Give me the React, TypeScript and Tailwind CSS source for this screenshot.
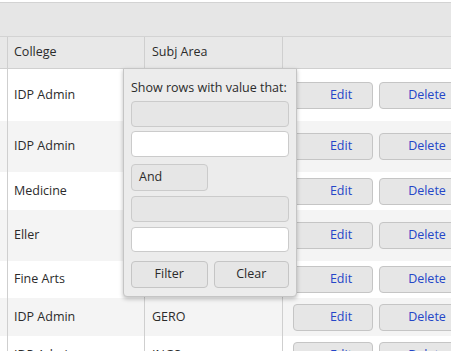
import React from 'react';

type Row = { college: string; subj: string; h: string; bg: string };

const rows: Row[] = [
  { college: 'IDP Admin', subj: '', h: 'h-[52px]', bg: 'bg-white' },
  { college: 'IDP Admin', subj: '', h: 'h-[51px]', bg: 'bg-[#f4f4f4]' },
  { college: 'Medicine', subj: '', h: 'h-[38px]', bg: 'bg-white' },
  { college: 'Eller', subj: '', h: 'h-[51px]', bg: 'bg-[#f4f4f4]' },
  { college: 'Fine Arts', subj: '', h: 'h-[37px]', bg: 'bg-white' },
  { college: 'IDP Admin', subj: 'GERO', h: 'h-[38px]', bg: 'bg-[#f4f4f4]' },
  { college: 'IDP Admin', subj: 'INGS', h: 'h-[38px]', bg: 'bg-white' },
];

const btn =
  'h-[27px] w-[80px] shrink-0 rounded-[4px] border border-[#c5c5c5] bg-[#e6e6e6] pl-[16px] text-[#2546c8]';

export default function App() {
  return (
    <div
      className="relative h-[351px] w-[451px] overflow-hidden bg-white text-[12.5px] text-[#2b2b2b]"
      style={{ fontFamily: '"Open Sans", "Noto Sans", sans-serif' }}
    >
      <div className="pt-[2px]">
        {/* toolbar band */}
        <div className="h-[35px] border-y border-[#d3d3d3] bg-[#e6e6e6]" />

        {/* header */}
        <div className="flex h-[32px] border-b border-[#d0d0d0] bg-[#e8e8e8]">
          <div className="w-[8px] shrink-0 border-r border-[#cfcfcf]" />
          <div className="flex w-[137px] shrink-0 items-center border-r border-[#cfcfcf] pl-[6px]">College</div>
          <div className="flex w-[138px] shrink-0 items-center border-r border-[#cfcfcf] pl-[7px]">Subj Area</div>
          <div className="flex-1" />
        </div>

        {/* body rows */}
        {rows.map((r, i) => (
          <div key={i} className={`flex ${r.h} ${r.bg}`}>
            <div className="w-[8px] shrink-0 border-r border-[#cfcfcf]" />
            <div className="flex w-[137px] shrink-0 items-center border-r border-[#cfcfcf] pl-[6px]">{r.college}</div>
            <div className="flex w-[138px] shrink-0 items-center border-r border-[#cfcfcf] pl-[7px]">{r.subj}</div>
            <div className="flex flex-1 items-center gap-[6px] pl-[10px]">
              <button className={btn}>Edit</button>
              <button className={btn}>Delete</button>
            </div>
          </div>
        ))}
      </div>

      {/* filter popup */}
      <div className="absolute left-[123px] top-[68px] flex h-[229px] w-[174px] flex-col rounded-b-[4px] border border-[#c5c5c5] bg-[#ececec] px-[7px] pt-[10px] shadow-[0_2px_4px_rgba(0,0,0,0.25)]">
        <div className="h-[18px] leading-[18px]">Show rows with value that:</div>
        <div className="mt-[4px] h-[26px] rounded-[4px] border border-[#cbcbcb] bg-[#e6e6e6]" />
        <div className="mt-[4px] h-[26px] rounded-[4px] border border-[#cbcbcb] bg-white" />
        <div className="mt-[7px] flex h-[27px] w-[77px] items-center rounded-[4px] border border-[#cbcbcb] bg-[#e6e6e6] pl-[7px]">
          And
        </div>
        <div className="mt-[5px] h-[26px] rounded-[4px] border border-[#cbcbcb] bg-[#e6e6e6]" />
        <div className="mt-[5px] h-[25px] rounded-[4px] border border-[#cbcbcb] bg-white" />
        <div className="mt-[9px] flex gap-[6px]">
          <button className="h-[27px] w-[77px] rounded-[4px] border border-[#c5c5c5] bg-[#e6e6e6]">Filter</button>
          <button className="h-[27px] w-[76px] rounded-[4px] border border-[#c5c5c5] bg-[#e6e6e6]">Clear</button>
        </div>
      </div>
    </div>
  );
}
